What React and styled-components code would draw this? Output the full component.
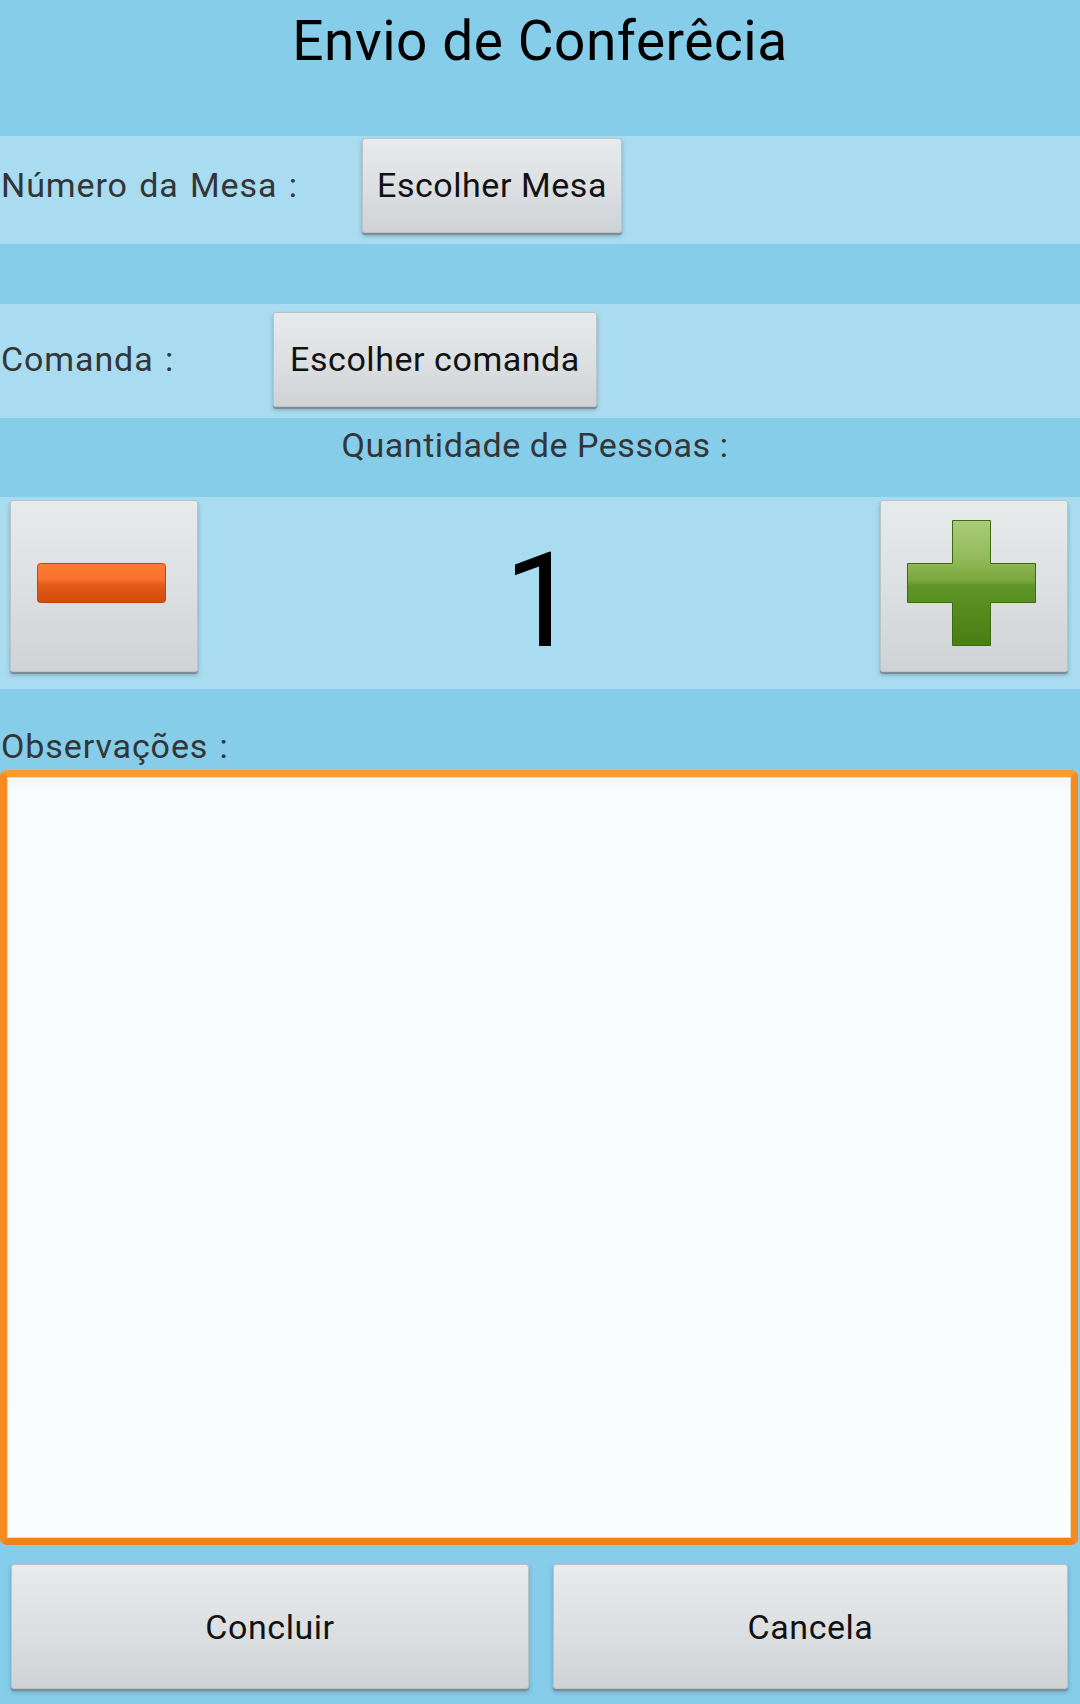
import React, { useState } from 'react';
import styled, { createGlobalStyle } from 'styled-components';

const GlobalStyle = createGlobalStyle`
  html, body {
    margin: 0;
    padding: 0;
    background: #86cdea;
  }
  * {
    box-sizing: border-box;
  }
`;

const Screen = styled.div`
  width: 1080px;
  min-height: 1704px;
  background: #86cdea;
  font-family: Roboto, 'Liberation Sans', sans-serif;
  letter-spacing: 0.55px;
  display: flex;
  flex-direction: column;
`;

const Header = styled.header`
  height: 136px;
  padding-top: 14px;
  text-align: center;
`;

const Title = styled.h1`
  margin: 0;
  font-size: 55px;
  line-height: 1;
  font-weight: 400;
  color: #000;
`;

const Row = styled.div`
  height: ${(p) => p.height}px;
  padding: ${(p) => p.top}px 0 11px 0;
  background: ${(p) => (p.light ? '#aadcf1' : 'transparent')};
  display: flex;
  align-items: center;
`;

const Spacer = styled.div`
  height: ${(p) => p.height}px;
`;

const Label = styled.span`
  width: ${(p) => (p.width ? `${p.width}px` : 'auto')};
  padding-left: 1px;
  font-size: 34px;
  line-height: 1;
  color: #333536;
  letter-spacing: 0.9px;
  word-spacing: 2px;
  flex-shrink: 0;
`;

const Button = styled.button`
  font-family: inherit;
  font-size: 34px;
  letter-spacing: inherit;
  line-height: 1;
  color: #111;
  padding: ${(p) => (p.icon ? '0 6px 7px 0' : '0 10px')};
  height: ${(p) => p.h || 95}px;
  width: ${(p) => (p.w ? `${p.w}px` : 'auto')};
  border: 1px solid #bcc3c7;
  border-radius: 3px;
  background: linear-gradient(180deg, #e8ebec 0%, #dcdfe1 55%, #d0d3d5 100%);
  box-shadow: 0 2px 0 #7e8d95, 0 3px 4px rgba(40, 70, 90, 0.35);
  display: flex;
  align-items: center;
  justify-content: center;
  cursor: pointer;
  flex-shrink: 0;
`;

const QtyBand = styled.div`
  height: 79px;
  padding: 10px 10px 0 0;
  text-align: center;
  font-size: 34px;
  line-height: 1;
  color: #333536;
`;

const Stepper = styled.div`
  height: 192px;
  background: #aadcf1;
  padding: 3px 12px 0 10px;
  display: flex;
  justify-content: space-between;
  align-items: flex-start;
`;

const Count = styled.span`
  margin-top: 35px;
  margin-left: 4px;
  font-size: 132px;
  line-height: 1;
  letter-spacing: 0;
  color: #000;
`;

const NotesBlock = styled.div`
  padding-top: 40px;
  display: flex;
  flex-direction: column;
`;

const NotesLabel = styled(Label)`
  margin-bottom: 7px;
`;

const Notes = styled.textarea`
  height: 775px;
  width: 1078px;
  margin: 0;
  border: 7px solid #f88b1f;
  border-top-color: #fb9b2c;
  border-bottom-color: #f0821a;
  border-radius: 7px;
  background: linear-gradient(180deg, #eff5f6 0px, #f8fcfd 14px, #f9fdfe 100%);
  box-shadow: inset 0 0 0 1px #e9d8c4;
  resize: none;
  outline: none;
  font-family: inherit;
  font-size: 34px;
  padding: 10px;
`;

const Actions = styled.div`
  padding: 19px 12px 0 11px;
  display: grid;
  grid-template-columns: 518px 515px;
  column-gap: 24px;
`;

const MinusIcon = () => (
  <svg width="129" height="40" viewBox="0 0 129 40">
    <defs>
      <linearGradient id="mg" x1="0" y1="0" x2="0" y2="1">
        <stop offset="0" stopColor="#ff7c34" />
        <stop offset="0.4" stopColor="#f8732d" />
        <stop offset="0.55" stopColor="#e25b1a" />
        <stop offset="1" stopColor="#d3490a" />
      </linearGradient>
    </defs>
    <rect x="0.5" y="0.5" width="128" height="39" rx="3" fill="url(#mg)" stroke="#c84400" />
  </svg>
);

const PlusIcon = () => (
  <svg width="129" height="126" viewBox="0 0 129 126">
    <defs>
      <linearGradient id="pg" x1="0" y1="0" x2="0" y2="1">
        <stop offset="0" stopColor="#a9cc79" />
        <stop offset="0.3" stopColor="#93bb5a" />
        <stop offset="0.48" stopColor="#7aa83c" />
        <stop offset="0.52" stopColor="#5f9526" />
        <stop offset="1" stopColor="#4a7d12" />
      </linearGradient>
    </defs>
    <path
      d="M45.5 0.5 H83.5 V43.5 H128.5 V82.5 H83.5 V125.5 H45.5 V82.5 H0.5 V43.5 H45.5 Z"
      fill="url(#pg)"
      stroke="#3c6a0e"
      strokeLinejoin="round"
    />
  </svg>
);

export default function App() {
  const [count, setCount] = useState(1);

  return (
    <Screen>
      <GlobalStyle />
      <Header>
        <Title>Envio de Conferêcia</Title>
      </Header>

      <Row light height={108} top={1}>
        <Label width={362}>Número da Mesa :</Label>
        <Button w={260}>Escolher Mesa</Button>
      </Row>

      <Spacer height={60} />

      <Row light height={114} top={7}>
        <Label width={273}>Comanda :</Label>
        <Button w={324}>Escolher comanda</Button>
      </Row>

      <QtyBand>Quantidade de Pessoas :</QtyBand>

      <Stepper>
        <Button icon w={188} h={172} onClick={() => setCount((c) => Math.max(1, c - 1))}>
          <MinusIcon />
        </Button>
        <Count>{count}</Count>
        <Button icon w={188} h={172} onClick={() => setCount((c) => c + 1)}>
          <PlusIcon />
        </Button>
      </Stepper>

      <NotesBlock>
        <NotesLabel>Observações :</NotesLabel>
        <Notes />
      </NotesBlock>

      <Actions>
        <Button h={125}>Concluir</Button>
        <Button h={125}>Cancela</Button>
      </Actions>
    </Screen>
  );
}
